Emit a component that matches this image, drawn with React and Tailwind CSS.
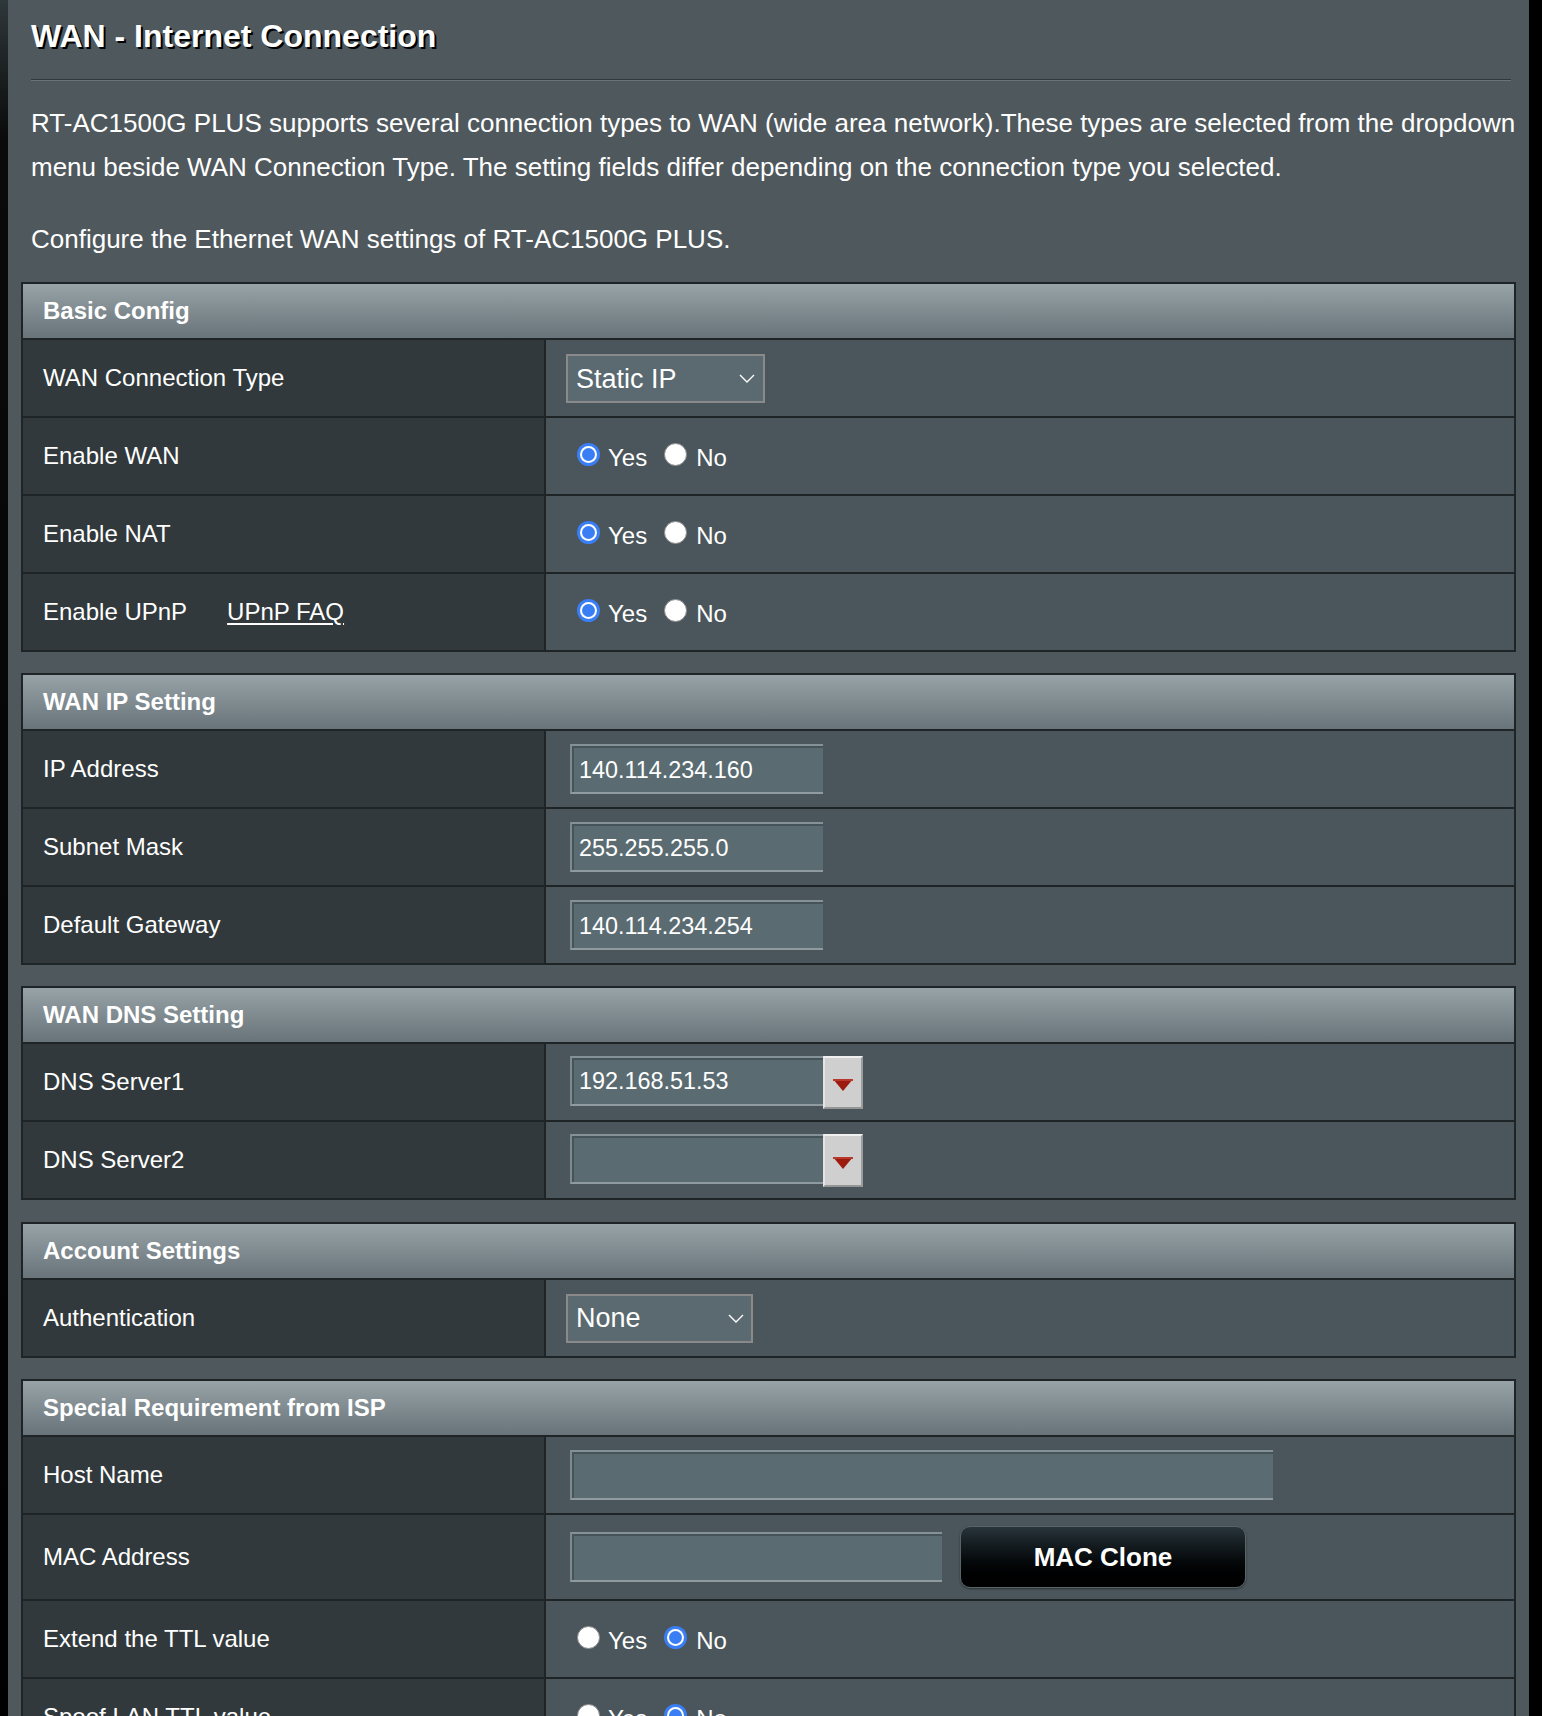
import React from "react";

function Radio({ checked, className = "" }) {
  if (checked) {
    return (
      <div className={"w-[23px] h-[23px] rounded-full bg-[#3a7ef6] flex items-center justify-center shrink-0 " + className}>
        <div className="w-[17px] h-[17px] rounded-full bg-white flex items-center justify-center">
          <div className="w-[13px] h-[13px] rounded-full bg-[#3a7ef6]" />
        </div>
      </div>
    );
  }
  return (
    <div className={"w-[23px] h-[23px] rounded-full bg-white border border-[#8a8a8a] shrink-0 " + className} />
  );
}

function YesNo({ value }) {
  return (
    <div className="flex items-center text-[24px] ml-[11px] mt-[4px]">
      <Radio checked={value === "yes"} className="mb-[8px]" />
      <span className="ml-[8px]">Yes</span>
      <Radio checked={value === "no"} className="ml-[17px] mb-[8px]" />
      <span className="ml-[9px]">No</span>
    </div>
  );
}

function Chevron() {
  return (
    <svg width="16" height="9" viewBox="0 0 16 9" className="shrink-0">
      <polyline points="1,1 8,8 15,1" fill="none" stroke="#ffffff" strokeWidth="1.4" />
    </svg>
  );
}

function Select({ value, width, pr, shift }) {
  return (
    <div className={"h-[49px] border-2 border-[#8a8a8a] bg-[#5a6a70] flex items-center justify-between pl-[8px] text-[27px] " + width + " " + pr}>
      <span className={shift}>{value}</span>
      <Chevron />
    </div>
  );
}

function TextInput({ value, width }) {
  return (
    <div className={"h-[50px] bg-[#5a6b71] border-t-2 border-l-2 border-b-2 border-t-[#849297] border-l-[#7d8b90] border-b-[#8f9b9f] shadow-[inset_2px_2px_0_#46545a] flex items-center pl-[7px] pt-[3px] text-[23.4px] " + width}>
      {value}
    </div>
  );
}

function DnsInput({ value }) {
  return (
    <div className="flex items-start">
      <TextInput value={value} width="w-[253px]" />
      <div className="w-[40px] h-[53px] bg-[#cfcfcf] border-2 border-t-[#f0f0f0] border-l-[#e4e4e4] border-r-[#9c9c9c] border-b-[#959595] flex items-center justify-center pt-[5px]">
        <svg width="20" height="12" viewBox="0 0 20 12">
          <polygon points="0,0 20,0 10,12" fill="#9c1a0e" />
          <rect x="0" y="0" width="20" height="2" fill="#b8392c" />
        </svg>
      </div>
    </div>
  );
}

function Section({ title, children, className = "" }) {
  return (
    <div className={"mx-[13px] border-x-2 border-t-2 border-[#1f2426] " + className}>
      <div className="h-[56px] border-b-2 border-[#1f2426] bg-gradient-to-b from-[#98a3a8] to-[#687479] flex items-center pl-[20px] text-[24px] font-bold">
        {title}
      </div>
      {children}
    </div>
  );
}

function Row({ label, children, h = "h-[78px]" }) {
  return (
    <div className={"flex border-b-2 border-[#1f2426] " + h}>
      <div className="w-[523px] shrink-0 bg-[#31393c] border-r-2 border-[#1f2426] flex items-center pl-[20px] text-[24px]">
        {label}
      </div>
      <div className="flex-1 bg-[#4a565b] flex items-center pl-[20px]">{children}</div>
    </div>
  );
}

export default function App() {
  return (
    <div className="w-[1542px] h-[1716px] overflow-hidden flex bg-black text-white font-['Liberation_Sans',Arial,Helvetica,sans-serif]">
      <div className="w-[8px] shrink-0 bg-[linear-gradient(to_bottom,#2e373a_0px,#0a0a0a_140px,#000_100%)]" />
      <div className="w-[1521px] shrink-0 bg-[#4f585c] flex flex-col">
        <div className="pl-[23px] pr-[18px]">
          <h1 className="pt-[20px] text-[32px] leading-[32px] font-bold [text-shadow:2px_2px_0_#000]">
            WAN - Internet Connection
          </h1>
          <div className="mt-[27px] h-[1px] bg-[#30383b]" />
          <div className="h-[1px] bg-[#687479]" />
          <div className="mt-[20px] text-[26px] leading-[44px] whitespace-nowrap">
            <div>
              RT-AC1500G PLUS supports several connection types to WAN (wide area network).These types are selected from the dropdown
            </div>
            <div>
              menu beside WAN Connection Type. The setting fields differ depending on the connection type you selected.
            </div>
          </div>
          <div className="mt-[28px] text-[26px] leading-[44px]">
            Configure the Ethernet WAN settings of RT-AC1500G PLUS.
          </div>
        </div>

        <Section title="Basic Config" className="mt-[21px]">
          <Row label="WAN Connection Type">
            <Select value="Static IP" width="w-[199px]" pr="pr-[8px]" shift="mt-[3px]" />
          </Row>
          <Row label="Enable WAN">
            <YesNo value="yes" />
          </Row>
          <Row label="Enable NAT">
            <YesNo value="yes" />
          </Row>
          <Row
            label={
              <span className="flex items-center">
                <span>Enable UPnP</span>
                <span className="ml-[40px] underline underline-offset-[3px]">UPnP FAQ</span>
              </span>
            }
          >
            <YesNo value="yes" />
          </Row>
        </Section>

        <Section title="WAN IP Setting" className="mt-[21px]">
          <Row label="IP Address">
            <div className="ml-[4px]"><TextInput value="140.114.234.160" width="w-[253px]" /></div>
          </Row>
          <Row label="Subnet Mask">
            <div className="ml-[4px]"><TextInput value="255.255.255.0" width="w-[253px]" /></div>
          </Row>
          <Row label="Default Gateway">
            <div className="ml-[4px]"><TextInput value="140.114.234.254" width="w-[253px]" /></div>
          </Row>
        </Section>

        <Section title="WAN DNS Setting" className="mt-[21px]">
          <Row label="DNS Server1">
            <div className="ml-[4px]"><DnsInput value="192.168.51.53" /></div>
          </Row>
          <Row label="DNS Server2">
            <div className="ml-[4px]"><DnsInput value="" /></div>
          </Row>
        </Section>

        <Section title="Account Settings" className="mt-[22px]">
          <Row label="Authentication">
            <Select value="None" width="w-[187px]" pr="pr-[7px]" shift="mt-[1px]" />
          </Row>
        </Section>

        <Section title="Special Requirement from ISP" className="mt-[21px]">
          <Row label="Host Name">
            <div className="ml-[4px]"><TextInput value="" width="w-[703px]" /></div>
          </Row>
          <Row label="MAC Address" h="h-[86px]">
            <div className="ml-[4px] flex items-center">
              <TextInput value="" width="w-[372px]" />
              <button className="ml-[18px] w-[286px] h-[62px] rounded-[10px] bg-gradient-to-b from-[#28343b] to-[#000000] border border-[#59646a] shadow-[0_1px_2px_#2a3033] text-[26px] font-bold text-white">
                MAC Clone
              </button>
            </div>
          </Row>
          <Row label="Extend the TTL value">
            <YesNo value="no" />
          </Row>
          <Row label="Spoof LAN TTL value">
            <YesNo value="no" />
          </Row>
        </Section>
      </div>
      <div className="w-[13px] shrink-0 bg-black" />
    </div>
  );
}
